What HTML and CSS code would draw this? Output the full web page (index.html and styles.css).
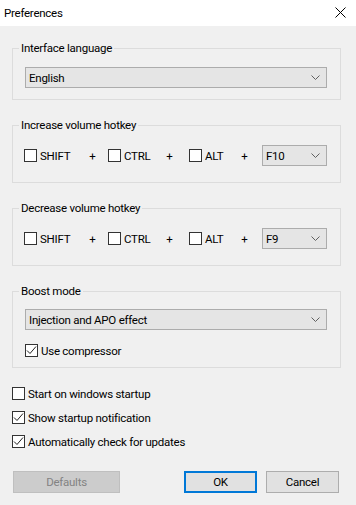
FILE: index.html
```html
<!DOCTYPE html>
<html lang="en">
<head>
  <meta charset="UTF-8">
  <title>Preferences</title>
  <link rel="stylesheet" href="styles.css">
</head>
<body>
  <div class="titlebar">
    <span class="title">Preferences</span>
    <svg class="close" width="11" height="11" viewBox="0 0 11 11"><path d="M0.5 0.5 L10.5 10.5 M10.5 0.5 L0.5 10.5" stroke="#000" stroke-width="1"/></svg>
  </div>

  <div class="content">
    <fieldset class="group group-lang">
      <legend>Interface language</legend>
      <div class="group-body">
        <div class="combo">
          <span>English</span>
          <svg class="chev" width="9" height="5" viewBox="0 0 9 5"><path d="M0.5 0.5 L4.5 4.5 L8.5 0.5" fill="none" stroke="#606060"/></svg>
        </div>
      </div>
    </fieldset>

    <fieldset class="group group-hotkey">
      <legend>Increase volume hotkey</legend>
      <div class="group-body hotkey">
        <label class="check"><span class="box"></span>SHIFT</label>
        <span class="plus">+</span>
        <label class="check"><span class="box"></span>CTRL</label>
        <span class="plus">+</span>
        <label class="check"><span class="box"></span>ALT</label>
        <span class="plus">+</span>
        <div class="combo combo-key">
          <span>F10</span>
          <svg class="chev" width="9" height="5" viewBox="0 0 9 5"><path d="M0.5 0.5 L4.5 4.5 L8.5 0.5" fill="none" stroke="#606060"/></svg>
        </div>
      </div>
    </fieldset>

    <fieldset class="group group-hotkey">
      <legend>Decrease volume hotkey</legend>
      <div class="group-body hotkey">
        <label class="check"><span class="box"></span>SHIFT</label>
        <span class="plus">+</span>
        <label class="check"><span class="box"></span>CTRL</label>
        <span class="plus">+</span>
        <label class="check"><span class="box"></span>ALT</label>
        <span class="plus">+</span>
        <div class="combo combo-key">
          <span>F9</span>
          <svg class="chev" width="9" height="5" viewBox="0 0 9 5"><path d="M0.5 0.5 L4.5 4.5 L8.5 0.5" fill="none" stroke="#606060"/></svg>
        </div>
      </div>
    </fieldset>

    <fieldset class="group group-boost">
      <legend>Boost mode</legend>
      <div class="group-body">
        <div class="combo">
          <span>Injection and APO effect</span>
          <svg class="chev" width="9" height="5" viewBox="0 0 9 5"><path d="M0.5 0.5 L4.5 4.5 L8.5 0.5" fill="none" stroke="#606060"/></svg>
        </div>
        <label class="check check-row compressor">
          <span class="box"><svg width="11" height="11" viewBox="0 0 11 11"><path d="M1 5.5 L4 8.5 L10 1.5" fill="none" stroke="#222" stroke-width="1"/></svg></span>Use compressor
        </label>
      </div>
    </fieldset>

    <div class="options">
      <label class="check check-row"><span class="box"></span>Start on windows startup</label>
      <label class="check check-row"><span class="box"><svg width="11" height="11" viewBox="0 0 11 11"><path d="M1 5.5 L4 8.5 L10 1.5" fill="none" stroke="#222" stroke-width="1"/></svg></span>Show startup notification</label>
      <label class="check check-row"><span class="box"><svg width="11" height="11" viewBox="0 0 11 11"><path d="M1 5.5 L4 8.5 L10 1.5" fill="none" stroke="#222" stroke-width="1"/></svg></span>Automatically check for updates</label>
    </div>

    <div class="buttons">
      <button class="btn btn-disabled">Defaults</button>
      <span class="spacer"></span>
      <button class="btn btn-default">OK</button>
      <button class="btn">Cancel</button>
    </div>
  </div>
</body>
</html>
```

FILE: styles.css
```css
* {
  box-sizing: border-box;
}
body {
  margin: 0;
  width: 356px;
  height: 505px;
  background: #f0f0f0;
  font-family: "Segoe UI", Roboto, sans-serif;
  font-size: 11.5px;
  letter-spacing: -0.25px;
  color: #000;
  overflow: hidden;
}
.titlebar {
  height: 26px;
  background: #fff;
  display: flex;
  align-items: center;
  padding: 0 10px 0 4px;
}
.title {
  flex: 1;
  line-height: 16px;
}
.close {
  display: block;
  margin-top: -1px;
}
.content {
  display: flex;
  flex-direction: column;
}
.group {
  margin: 17px 15px 0 12px;
  border: 1px solid #dcdcdc;
  padding: 0 13px 0 6px;
  min-width: 0;
}
.group-lang {
  margin-top: 14px;
  padding-top: 11px;
  padding-bottom: 11px;
}
.group-hotkey {
  padding-top: 12px;
  padding-bottom: 16px;
}
.group-boost {
  padding-top: 10px;
  padding-bottom: 8px;
}
.group legend {
  padding: 0 2px;
  line-height: 16px;
}
.group-body {
  padding-left: 6px;
}
.combo {
  height: 21px;
  background: #e5e5e5;
  border: 1px solid #acacac;
  display: flex;
  align-items: center;
  padding: 0 6px 0 3px;
}
.combo span {
  flex: 1;
}
.chev {
  display: block;
}
.hotkey {
  display: grid;
  grid-template-columns: 53px 31px 42px 39px 38px 35px 65px;
  align-items: center;
  margin-left: -1px;
}
.plus {
  text-align: center;
}
.check {
  display: flex;
  align-items: center;
  white-space: nowrap;
}
.box {
  width: 13px;
  height: 13px;
  border: 1px solid #333;
  background: #fff;
  margin-right: 3px;
  flex: none;
  display: flex;
}
.box svg {
  display: block;
}
.check-row {
  height: 17px;
}
.compressor {
  margin-top: 12px;
}
.options {
  margin: 17px 0 0 12px;
  display: flex;
  flex-direction: column;
  gap: 7px;
}
.buttons {
  display: flex;
  margin: 21px 17px 0 13px;
}
.spacer {
  flex: 1;
}
.btn {
  width: 73px;
  height: 22px;
  font: inherit;
  letter-spacing: inherit;
  color: #000;
  background: #e1e1e1;
  border: 1px solid #adadad;
  padding: 0;
  margin-left: 9px;
}
.btn-disabled {
  width: 107px;
  margin-left: 0;
  background: #cccccc;
  border-color: #bfbfbf;
  color: #838383;
}
.btn-default {
  border: 2px solid #0078d7;
}
```
